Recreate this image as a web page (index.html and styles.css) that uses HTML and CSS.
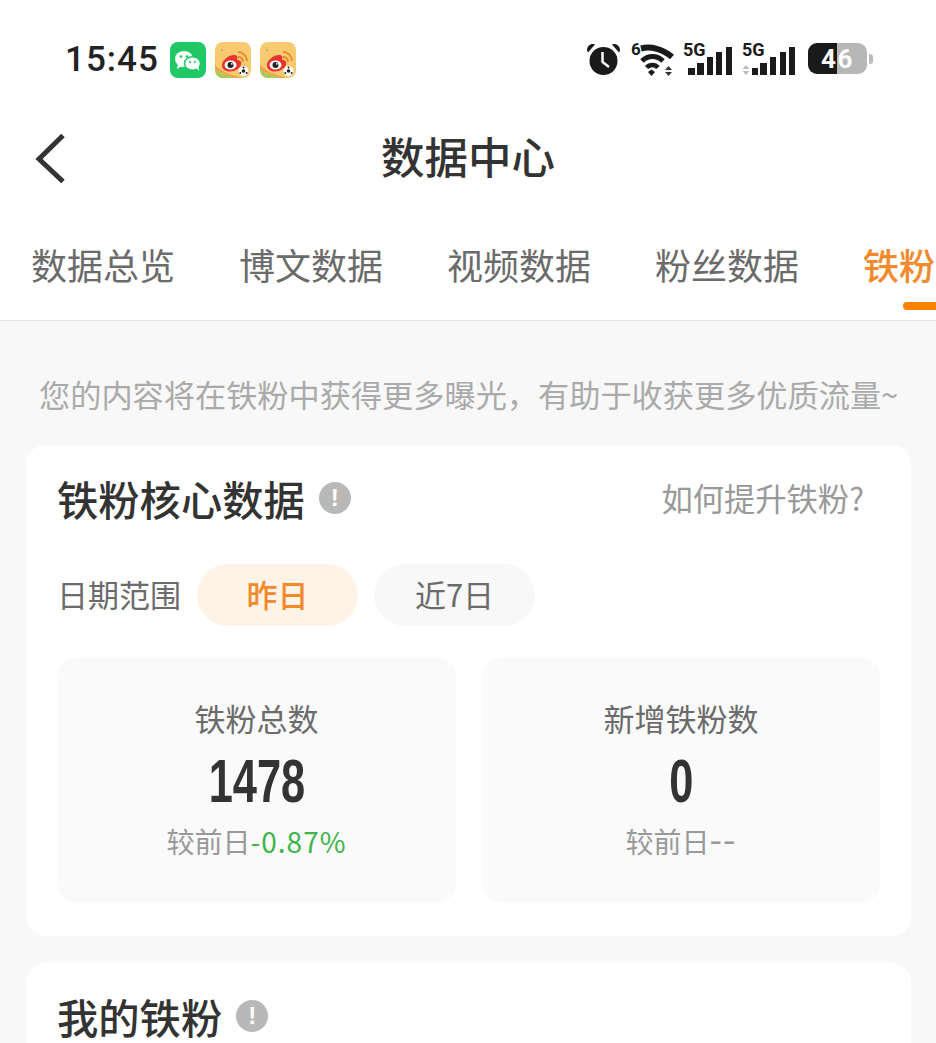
FILE: index.html
```html
<!DOCTYPE html>
<html lang="zh">
<head>
<meta charset="utf-8">
<title>数据中心</title>
<link rel="stylesheet" href="styles.css">
</head>
<body>
<div class="page">
  <div class="top">
    <div class="status">
      <div class="status-left">
        <span class="time">15:45</span>
        <svg class="app" viewBox="0 0 36 36"><rect width="36" height="36" rx="8" fill="#1fc765"/><ellipse cx="14" cy="17" rx="9" ry="8" fill="#fff"/><path d="M8 22l-1 5 5-3z" fill="#fff"/><ellipse cx="22.500" cy="21.500" rx="8" ry="6.700" fill="#fff" stroke="#1fc765" stroke-width="1.500"/><path d="M26.500 26l2.500 3-.5-5z" fill="#fff"/><circle cx="11" cy="14.500" r="1.300" fill="#1fc765"/><circle cx="17" cy="14.500" r="1.300" fill="#1fc765"/><circle cx="20" cy="20" r="1.100" fill="#1fc765"/><circle cx="25" cy="20" r="1.100" fill="#1fc765"/></svg>
        <svg class="app" viewBox="0 0 36 36"><rect width="36" height="36" rx="8" fill="#f8ca70"/><path d="M0 27c6 5 14 8 26 9H8a8 8 0 0 1-8-8z" fill="#a7c957"/><path d="M0 23c6 6 15 10 27 13h-5C13 34 5 31 0 27z" fill="#f0a24a"/><path d="M7 23c0-5 7-10 12-10 3 0 4 2 3 5 3 0 5 1.500 4 4.500-1 4-6 7-11 7-5 0-8-2.500-8-6.500z" fill="#e8342f"/><ellipse cx="15.500" cy="23" rx="6" ry="4.500" fill="#fff"/><circle cx="15.500" cy="23" r="3" fill="#222"/><circle cx="16.800" cy="21.800" r=".9" fill="#fff"/><path d="M23 15c3 0 5 2 5 5M23 10c5 0 9 4 9 9" fill="none" stroke="#e98b2d" stroke-width="1.800"/><circle cx="7" cy="8" r="1" fill="#e0a040"/><circle cx="28.500" cy="29" r="5" fill="#fff"/><circle cx="28.500" cy="29" r="1.800" fill="#222"/><circle cx="28.500" cy="25.500" r="1" fill="#222"/><circle cx="25.300" cy="31" r="1" fill="#222"/><circle cx="31.700" cy="31" r="1" fill="#222"/></svg>
        <svg class="app" viewBox="0 0 36 36"><rect width="36" height="36" rx="8" fill="#f8ca70"/><path d="M0 27c6 5 14 8 26 9H8a8 8 0 0 1-8-8z" fill="#a7c957"/><path d="M0 23c6 6 15 10 27 13h-5C13 34 5 31 0 27z" fill="#f0a24a"/><path d="M7 23c0-5 7-10 12-10 3 0 4 2 3 5 3 0 5 1.500 4 4.500-1 4-6 7-11 7-5 0-8-2.500-8-6.500z" fill="#e8342f"/><ellipse cx="15.500" cy="23" rx="6" ry="4.500" fill="#fff"/><circle cx="15.500" cy="23" r="3" fill="#222"/><circle cx="16.800" cy="21.800" r=".9" fill="#fff"/><path d="M23 15c3 0 5 2 5 5M23 10c5 0 9 4 9 9" fill="none" stroke="#e98b2d" stroke-width="1.800"/><circle cx="7" cy="8" r="1" fill="#e0a040"/><circle cx="28.500" cy="29" r="5" fill="#fff"/><circle cx="28.500" cy="29" r="1.800" fill="#222"/><circle cx="28.500" cy="25.500" r="1" fill="#222"/><circle cx="25.300" cy="31" r="1" fill="#222"/><circle cx="31.700" cy="31" r="1" fill="#222"/></svg>
      </div>
      <div class="status-right">
        <svg class="ic-alarm" viewBox="0 0 33 36"><path d="M0 8.500C0 4 4 1 8 2.500L1 10.500zM33 8.500C33 4 29 1 25 2.500L32 10.500z" fill="#1a1a1a"/><circle cx="16.500" cy="19" r="14" fill="#1a1a1a"/><path d="M15.500 10v10l6.500 5" fill="none" stroke="#fff" stroke-width="2.500"/></svg>
        <svg class="ic-wifi" viewBox="0 0 44 36"><text x="0" y="13" class="ic-num">6</text><path d="M10 6.500C20 4 32 7 41 15" fill="none" stroke="#1a1a1a" stroke-width="6"/><path d="M11 19C17 13 26 13 32 19" fill="none" stroke="#1a1a1a" stroke-width="5"/><path d="M15.500 25.500C19 22 24 22 27 25.500" fill="none" stroke="#1a1a1a" stroke-width="4.500"/><path d="M20.500 34l-3.500-4 3.500-2.500 3.500 2.500z" fill="#1a1a1a"/><path d="M37.500 24l3.500 4h-7zM37.500 34l3.500-4h-7z" fill="#333"/></svg>
        <svg class="ic-sig" viewBox="0 0 50 36"><text x="0" y="14" class="ic-5g">5G</text><rect x="5" y="26" width="7" height="7" fill="#1a1a1a"/><rect x="14" y="21" width="7" height="12" fill="#1a1a1a"/><rect x="24" y="15" width="6" height="18" fill="#1a1a1a"/><rect x="33" y="10" width="6" height="23" fill="#1a1a1a"/><rect x="43" y="5" width="6" height="28" fill="#1a1a1a"/></svg>
        <svg class="ic-sig2" viewBox="0 0 54 36"><text x="0" y="14" class="ic-5g">5G</text><path d="M4 23l3.500 4h-7zM4 33l3.500-4h-7z" fill="#bbb"/><rect x="10" y="26" width="6" height="7" fill="#1a1a1a"/><rect x="18" y="21" width="7" height="12" fill="#1a1a1a"/><rect x="28" y="15" width="6" height="18" fill="#1a1a1a"/><rect x="38" y="10" width="6" height="23" fill="#1a1a1a"/><rect x="47" y="5" width="6" height="28" fill="#1a1a1a"/></svg>
        <div class="battery"><div class="batt-body"><span class="batt-num">46</span></div><span class="batt-cap"></span></div>
      </div>
    </div>
    <div class="nav">
      <svg class="back" viewBox="0 0 32 50"><path d="M28 2.500L4 26l24 22.500" fill="none" stroke="#333" stroke-width="5"/></svg>
      <h1 class="nav-title">数据中心</h1>
    </div>
    <div class="tabs">
      <span class="tab">数据总览</span>
      <span class="tab">博文数据</span>
      <span class="tab">视频数据</span>
      <span class="tab">粉丝数据</span>
      <span class="tab active">铁粉数据</span>
    </div>
  </div>
  <div class="main">
    <p class="notice">您的内容将在铁粉中获得更多曝光&#xFF0C;有助于收获更多优质流量~</p>
    <section class="card card-first">
      <div class="card-head">
        <div class="head-left">
          <h2 class="card-title">铁粉核心数据</h2>
          <span class="info">!</span>
        </div>
        <span class="link">如何提升铁粉?</span>
      </div>
      <div class="range">
        <span class="range-label">日期范围</span>
        <span class="pill on">昨日</span>
        <span class="pill">近7日</span>
      </div>
      <div class="stats">
        <div class="stat">
          <span class="stat-name">铁粉总数</span>
          <span class="stat-num">1478</span>
          <span class="stat-sub">较前日<span class="down">-0.87%</span></span>
        </div>
        <div class="stat">
          <span class="stat-name">新增铁粉数</span>
          <span class="stat-num">0</span>
          <span class="stat-sub">较前日<span class="dash">--</span></span>
        </div>
      </div>
    </section>
    <section class="card card-second">
      <div class="head-left">
        <h2 class="card-title">我的铁粉</h2>
        <span class="info">!</span>
      </div>
    </section>
  </div>
</div>
</body>
</html>
```

FILE: styles.css
```css
* { box-sizing: border-box; }
html, body { margin: 0; height: 1043px; overflow: hidden; }
body { font-family: "Noto Sans CJK SC", "Noto Sans", sans-serif; background: #f8f8f8; }
.page { width: 936px; height: 1043px; overflow: hidden; display: flex; flex-direction: column; }
.top { background: #fff; border-bottom: 1px solid #e6e6e6; height: 321px; flex: none; }

.status { height: 120px; padding: 42px 63px 0 65px; display: flex; justify-content: space-between; align-items: flex-start; }
.status-left { display: flex; align-items: center; gap: 9px; height: 36px; }
.time { font-family: Roboto, sans-serif; font-weight: 500; font-size: 35px; letter-spacing: 1px; color: #222; margin-right: 2.500px; line-height: 36px; }
.app { width: 36px; height: 36px; display: block; }
.status-right { display: flex; align-items: flex-start; height: 36px; }
.status-right svg { overflow: visible; }
.ic-alarm { width: 33px; height: 36px; margin-right: 11px; }
.ic-wifi { width: 44px; height: 36px; margin-right: 8px; }
.ic-sig { width: 50px; height: 36px; margin-right: 9px; }
.ic-sig2 { width: 54px; height: 36px; margin-right: 12px; }
.ic-num { font: 700 17px Roboto, sans-serif; fill: #1a1a1a; }
.ic-5g { font: 700 18px Roboto, sans-serif; fill: #1a1a1a; }
.battery { display: flex; align-items: center; gap: 2px; height: 33px; }
.batt-body { width: 59px; height: 31px; border-radius: 9px; background: linear-gradient(90deg, #1a1a1a 0 29px, #b7b7b7 29px); display: flex; align-items: center; justify-content: center; }
.batt-num { font: 700 26px Roboto, sans-serif; color: #fff; letter-spacing: 1.500px; }
.batt-cap { width: 4px; height: 10px; border-radius: 0 3px 3px 0; background: #bbb; }

.nav { height: 78px; display: flex; align-items: center; justify-content: center; position: relative; }
.back { position: absolute; left: 35px; top: 13px; width: 32px; height: 50px; }
.nav-title { margin: 0; padding-bottom: 6px; font-size: 43.500px; font-weight: 500; color: #333; line-height: 72px; }

.tabs { display: flex; gap: 64px; padding: 0 0 0 31px; height: 122px; overflow: hidden; white-space: nowrap; }
.tab { font-size: 36px; color: #6b6b6b; height: 122px; line-height: 56px; padding-top: 38px; position: relative; flex: none; }
.tab.active { color: #f08a2c; font-weight: 500; }
.tab.active::after { content: ""; position: absolute; left: 40px; width: 64px; top: 104px; height: 8px; border-radius: 4px; background: #ff8200; }

.main { flex: 1; padding: 0 25px 0 26px; }
.notice { margin: 0; height: 124px; padding: 53px 0 0 13px; font-size: 31.200px; line-height: 40px; color: #aaa; white-space: nowrap; }
.card { background: #fff; border-radius: 20px; }
.card-first { height: 491px; padding: 0 31px; }
.card-second { margin-top: 27px; height: 120px; padding: 28px 31px 0; }
.card-head { display: flex; justify-content: space-between; align-items: center; padding-top: 24px; height: 82px; padding-right: 16px; }
.head-left { display: flex; align-items: center; gap: 14px; }
.card-title { margin: 0; font-size: 41.300px; font-weight: 500; color: #333; line-height: 50px; }
.info { width: 32px; height: 32px; border-radius: 50%; background: #b8b8b8; color: #fff; font: 700 24px/32px "Liberation Sans", sans-serif; text-align: center; flex: none; }
.link { font-size: 31.300px; color: #999; line-height: 50px; }

.range { display: flex; align-items: center; gap: 16px; margin-top: 36px; height: 63px; }
.range-label { font-size: 31px; color: #6b6b6b; padding-bottom: 2px; }
.pill { width: 161px; height: 62px; border-radius: 31px; background: #f8f8f8; color: #6b6b6b; font-size: 31px; line-height: 60px; text-align: center; }
.pill.on { background: #fff3e8; color: #f08a2c; font-weight: 500; }

.stats { display: grid; grid-template-columns: 399px 398px; gap: 26px; margin-top: 31px; }
.stat { height: 246px; background: #fafafa; border-radius: 20px; display: flex; flex-direction: column; align-items: center; padding-top: 39px; }
.stat-name { font-size: 31px; line-height: 44px; color: #6b6b6b; }
.stat-num { font-family: "Liberation Sans", sans-serif; font-weight: 700; font-size: 62px; line-height: 64px; color: #333; margin-top: 9px; transform: scaleX(.7); }
.stat-sub { font-size: 28px; line-height: 40px; color: #999; margin-top: 8px; }
.down { color: #3cb44b; letter-spacing: 1px; }
.dash { font-size: 36px; line-height: 28px; letter-spacing: 1px; }
```
